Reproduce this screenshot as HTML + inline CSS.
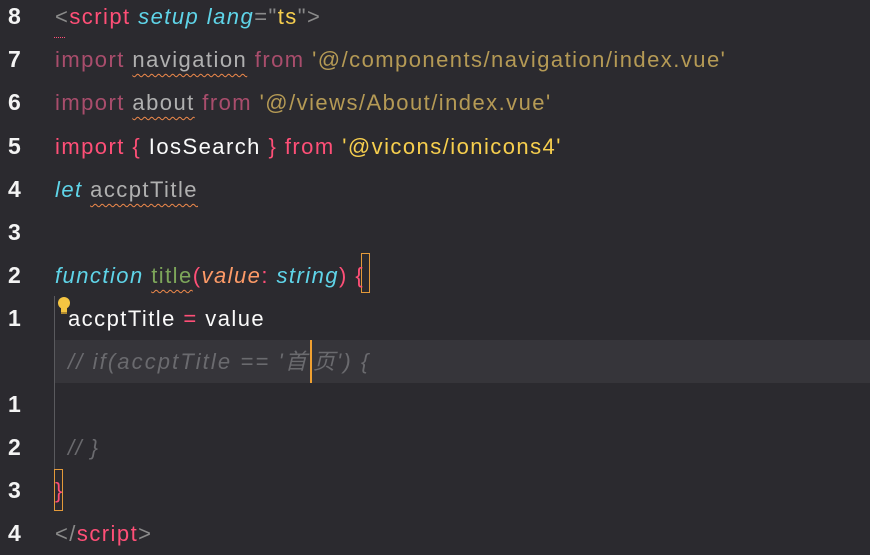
<!DOCTYPE html>
<html><head><meta charset="utf-8"><style>
html,body{margin:0;padding:0;background:#2b2a2f;width:870px;height:551px;overflow:hidden}
.l{position:absolute;left:0;height:43px;line-height:43px;font-family:"Liberation Sans","Noto Sans CJK SC",sans-serif;font-size:22px;white-space:pre;letter-spacing:1.45px}
.n{position:absolute;left:8px;color:#f4f4f4;width:30px;font-weight:bold;font-size:23px;letter-spacing:0}
.c{position:absolute;left:55px}
.pk{color:#ff4f77}.dpk{color:#a94d6c}.cy{color:#5fd4e8;font-style:italic}.ys{color:#f7cf4e}.ds{color:#b59a55}
.g{color:#8a8a8a}.dg{color:#b0b0b0}.w{color:#fafafa}.gr{color:#7da65a}.or{color:#fc9a67;font-style:italic}.cm{color:#6a6a6e;font-style:italic}
.sq{text-decoration:underline wavy #f08a4b;text-decoration-thickness:1px;text-underline-offset:6px}
.cur{display:inline-block;width:2px;height:43px;background:#f0a030;vertical-align:top;margin:0 1px}
</style></head><body>
<div style="position:absolute;left:55px;top:340px;width:815px;height:43px;background:#36353a"></div>
<div style="position:absolute;left:54px;top:296px;width:1px;height:215px;background:#5a5a5e"></div>
<div style="position:absolute;left:361px;top:253px;width:9px;height:40px;border:1px solid #e49a3a;box-sizing:border-box"></div>
<div style="position:absolute;left:54px;top:469px;width:9px;height:42px;border:1px solid #e49a3a;box-sizing:border-box"></div>
<div style="position:absolute;left:54px;top:34px;width:11px;height:3px;border-bottom:1px dotted #ff4f77"></div>
<svg style="position:absolute;left:56px;top:296px" width="16" height="20"><circle cx="8" cy="7" r="6" fill="#f5c542"/><rect x="5" y="12" width="6" height="4" fill="#f5c542"/><rect x="5" y="16" width="6" height="2" fill="#b08a30"/></svg>
<div class="l" style="top:-5px"><span class="n">8</span><span class="c"><span class="g">&lt;</span><span class="pk">script</span> <span class="cy">setup</span> <span class="cy">lang</span><span class="g">="</span><span class="ys">ts</span><span class="g">"&gt;</span></span></div>
<div class="l" style="top:38px"><span class="n">7</span><span class="c"><span class="dpk">import</span> <span class="dg sq">navigation</span> <span class="dpk">from</span> <span class="ds">'@/components/navigation/index.vue'</span></span></div>
<div class="l" style="top:81px"><span class="n">6</span><span class="c"><span class="dpk">import</span> <span class="dg sq">about</span> <span class="dpk">from</span> <span class="ds">'@/views/About/index.vue'</span></span></div>
<div class="l" style="top:125px"><span class="n">5</span><span class="c"><span class="pk">import</span> <span class="pk">{</span> <span class="w">IosSearch</span> <span class="pk">}</span> <span class="pk">from</span> <span class="ys">'@vicons/ionicons4'</span></span></div>
<div class="l" style="top:168px"><span class="n">4</span><span class="c"><span class="cy">let</span> <span class="dg sq">accptTitle</span></span></div>
<div class="l" style="top:211px"><span class="n">3</span></div>
<div class="l" style="top:254px"><span class="n">2</span><span class="c"><span class="cy">function</span> <span class="gr sq">title</span><span class="pk">(</span><span class="or">value</span><span class="pk">:</span> <span class="cy">string</span><span class="pk">)</span> <span class="pk">{</span></span></div>
<div class="l" style="top:297px"><span class="n">1</span><span class="c" style="left:68px"><span class="w">accptTitle</span> <span class="pk">=</span> <span class="w">value</span></span></div>
<div class="l" style="top:340px;letter-spacing:2.1px"><span class="c" style="left:68px"><span class="cm">// if(accptTitle == '首<span class="cur"></span>页') {</span></span></div>
<div class="l" style="top:383px"><span class="n">1</span></div>
<div class="l" style="top:426px"><span class="n">2</span><span class="c" style="left:68px"><span class="cm">// }</span></span></div>
<div class="l" style="top:469px"><span class="n">3</span><span class="c"><span class="pk">}</span></span></div>
<div class="l" style="top:512px"><span class="n">4</span><span class="c"><span class="g">&lt;/</span><span class="pk">script</span><span class="g">&gt;</span></span></div>
</body></html>
